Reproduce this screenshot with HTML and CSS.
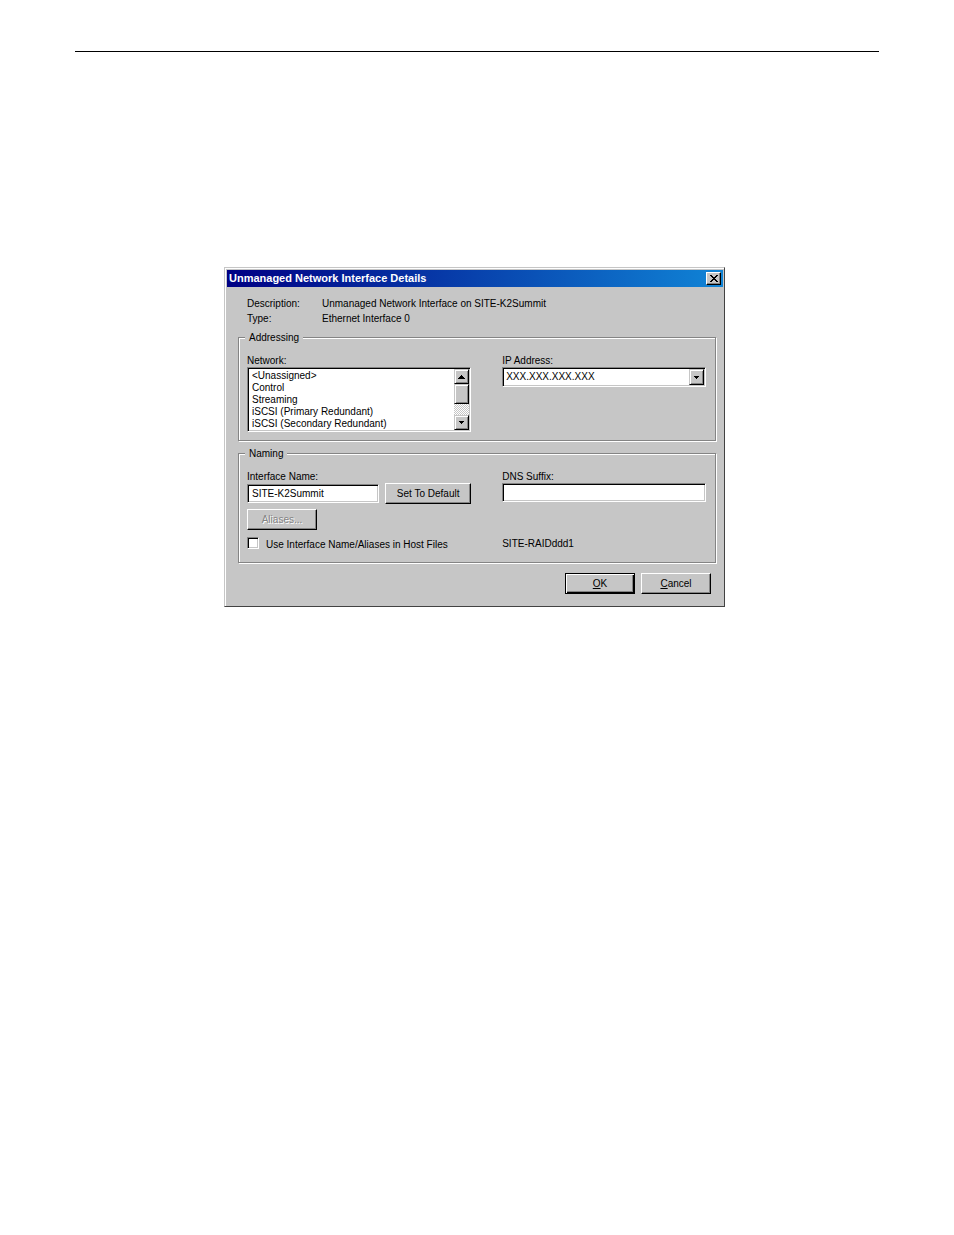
FILE: index.html
```html
<!DOCTYPE html>
<html lang="en">
<head>
<meta charset="utf-8">
<meta name="viewport" content="width=device-width, initial-scale=1">
<title>Unmanaged Network Interface Details</title>
<link rel="stylesheet" href="styles.css">
</head>
<body>
<main class="page">
  <hr class="page-rule">
  <form class="dialog" role="dialog" aria-labelledby="dialog-title">
    <header class="title-bar">
      <h1 class="title" id="dialog-title">Unmanaged Network Interface Details</h1>
      <button class="close" type="button" aria-label="Close">
        <svg width="8" height="7" viewBox="0 0 8 7" shape-rendering="crispEdges" aria-hidden="true"><path d="M0 0h2v1h1v1h2V1h1V0h2v1H7v1H6v1H5v1h1v1h1v1h1v1H6V6H5V5H3v1H2v1H0V6h1V5h1V4h1V3H2V2H1V1H0z"/></svg>
      </button>
    </header>
    <div class="body">
      <dl class="info">
        <dt>Description:</dt><dd>Unmanaged Network Interface on SITE-K2Summit</dd>
        <dt>Type:</dt><dd>Ethernet Interface 0</dd>
      </dl>

      <fieldset class="group">
        <legend>Addressing</legend>
        <div class="columns">
          <div class="column">
            <label class="field-label" for="network">Network:</label>
            <div class="list-box sunken">
              <select class="list" id="network" size="5">
                <option>&lt;Unassigned&gt;</option>
                <option>Control</option>
                <option>Streaming</option>
                <option>iSCSI (Primary Redundant)</option>
                <option>iSCSI (Secondary Redundant)</option>
              </select>
              <div class="scrollbar" aria-hidden="true">
                <span class="arrow raised"><svg width="7" height="4" viewBox="0 0 7 4" shape-rendering="crispEdges"><path d="M3 0h1v1h1v1h1v1h1v1H0V3h1V2h1V1h1z"/></svg></span>
                <span class="thumb raised"></span>
                <span class="arrow arrow-end raised"><svg width="5" height="3" viewBox="0 0 5 3" shape-rendering="crispEdges"><path d="M0 0h5v1H4v1H3v1H2V2H1V1H0z"/></svg></span>
              </div>
            </div>
          </div>
          <div class="column">
            <label class="field-label" for="ip">IP Address:</label>
            <div class="combo sunken">
              <select class="combo-value" id="ip"><option>XXX.XXX.XXX.XXX</option></select>
              <span class="arrow combo-arrow raised" aria-hidden="true"><svg width="5" height="3" viewBox="0 0 5 3" shape-rendering="crispEdges"><path d="M0 0h5v1H4v1H3v1H2V2H1V1H0z"/></svg></span>
            </div>
          </div>
        </div>
      </fieldset>

      <fieldset class="group">
        <legend>Naming</legend>
        <div class="columns">
          <div class="column">
            <label class="field-label" for="name">Interface Name:</label>
            <div class="name-row">
              <input class="text sunken" id="name" type="text" value="SITE-K2Summit">
              <button class="button button-wide" type="button">Set To Default</button>
            </div>
            <button class="button button-aliases" type="button" disabled>Aliases...</button>
            <div class="check-row">
              <input class="check sunken" id="hosts" type="checkbox">
              <label for="hosts">Use Interface Name/Aliases in Host Files</label>
            </div>
          </div>
          <div class="column">
            <label class="field-label" for="dns">DNS Suffix:</label>
            <input class="text sunken" id="dns" type="text">
            <p class="site">SITE-RAIDddd1</p>
          </div>
        </div>
      </fieldset>

      <footer class="actions">
        <button class="button button-default" type="submit"><u>O</u>K</button>
        <button class="button" type="button"><u>C</u>ancel</button>
      </footer>
    </div>
  </form>
</main>
</body>
</html>
```
FILE: styles.css
```css
* { box-sizing: border-box; }

body {
  margin: 0;
  background: #fff;
  color: #000;
  font: 10px/14px "Liberation Sans", Arial, sans-serif;
}

.page { padding: 51px 75px; }

.page-rule {
  height: 1px;
  margin: 0 0 215px;
  border: 0;
  background: #000;
}

.dialog {
  max-width: 501px;
  margin-left: 149px;
  padding: 1px 0 0 1px;
  background: #c6c6c6;
  border: 1px solid;
  border-color: #c6c6c6 #424242 #424242 #c6c6c6;
  box-shadow: inset 1px 1px #fff;
}

.title-bar {
  display: flex;
  align-items: center;
  justify-content: space-between;
  height: 17px;
  margin: 1px 1px 0;
  padding: 0 2px;
  background: linear-gradient(90deg, #000084, #1084d6);
}

.title {
  margin: 0;
  color: #fff;
  font-size: 11px;
  line-height: 17px;
}

.close {
  display: flex;
  align-items: center;
  justify-content: center;
  width: 15px;
  height: 13px;
  padding: 0;
  background: #c6c6c6;
  border: 1px solid;
  border-color: #fff #000 #000 #fff;
  box-shadow: inset -1px -1px #848484;
}

.body { padding: 9px 8px 12px 12px; }

.info {
  display: grid;
  grid-template-columns: 75px 1fr;
  margin: 0 0 4px 9px;
  line-height: 15px;
}

.info dd { margin: 0; }

.group {
  min-width: 0;
  margin: 0 0 5px;
  padding: 9px 9px 8px 8px;
  border: 1px solid #848484;
  box-shadow: 1px 1px #fff, inset 1px 1px #fff;
}

.group legend {
  height: 14px;
  margin-left: -2px;
  padding: 0 4px;
  background: #c6c6c6;
  line-height: 16px;
}

.field-label {
  height: 14px;
  line-height: 16px;
}

.columns {
  display: grid;
  grid-template-columns: 11fr 10fr;
  column-gap: 31px;
}

.column {
  display: flex;
  flex-direction: column;
  min-width: 0;
}

.sunken {
  border: 1px solid;
  border-color: #848484 #fff #fff #848484;
  box-shadow: inset 1px 1px #000, inset -1px -1px #c6c6c6;
  background: #fff;
}

.raised {
  background: #c6c6c6;
  border: 1px solid;
  border-color: #c6c6c6 #000 #000 #c6c6c6;
  box-shadow: inset 1px 1px #fff, inset -1px -1px #848484;
}

.list-box {
  display: flex;
  height: 65px;
  padding: 1px;
}

.list,
.combo-value {
  flex: 1;
  min-width: 0;
  appearance: none;
  border: 0;
  border-radius: 0;
  outline: 0;
  background: transparent;
  color: #000;
  font: inherit;
}

.list {
  height: 61px;
  padding: 1px 3px 0;
  overflow: hidden;
}

.list option {
  height: 12px;
  min-height: 0;
  padding: 0;
  line-height: 12px;
}

.scrollbar {
  display: flex;
  flex-direction: column;
  width: 15px;
  background: repeating-conic-gradient(#c6c6c6 0 25%, #fff 0 50%) 0 0 / 2px 2px;
}

.arrow {
  display: flex;
  flex: none;
  align-items: center;
  justify-content: center;
  width: 15px;
  height: 15px;
}

.thumb { height: 20px; }
.arrow-end { margin-top: auto; }

.combo {
  display: flex;
  height: 20px;
  padding: 1px;
}

.combo-value { padding: 0 2px; }

.combo-arrow { height: 16px; }

.text {
  width: 100%;
  height: 19px;
  padding: 1px 4px;
  border-radius: 0;
  color: #000;
  font: inherit;
}

.name-row {
  display: flex;
  align-items: center;
  gap: 6px;
}

.name-row .text {
  flex: 1;
  min-width: 0;
}

.button {
  width: 70px;
  height: 21px;
  padding: 0;
  background: #c6c6c6;
  border: 1px solid;
  border-color: #fff #000 #000 #fff;
  border-radius: 0;
  box-shadow: inset -1px -1px #848484;
  color: #000;
  font: inherit;
}

.button:disabled {
  color: #848484;
  text-shadow: 1px 1px #fff;
}

.button-wide { width: 86px; }
.button-aliases { margin: 5px 0 7px; }

.button-default {
  border-color: #000;
  box-shadow: inset 1px 1px #fff, inset -1px -1px #000, inset -2px -2px #848484;
}

.check-row {
  display: flex;
  gap: 7px;
  padding-bottom: 2px;
  line-height: 15px;
}

.check {
  appearance: none;
  width: 12px;
  height: 12px;
  margin: 0;
}

.site { margin: 35px 0 0; }

.actions {
  display: flex;
  justify-content: flex-end;
  gap: 6px;
  margin-top: 10px;
  padding-right: 5px;
}
```
